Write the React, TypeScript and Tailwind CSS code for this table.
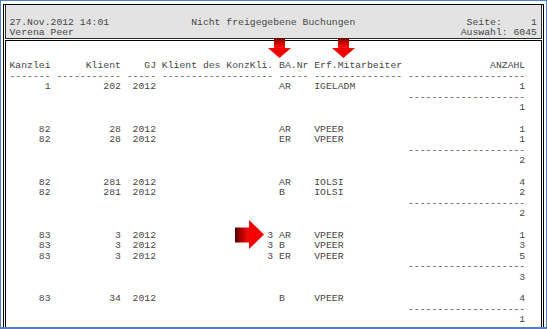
import React from "react";

const r = (s: string | number, n: number) => String(s).padStart(n);
const l = (s: string | number, n: number) => String(s).padEnd(n);

function row(k: number, kl: number, gj: number, konz: string | number, ba: string, erf: string, anz: number) {
  return [r(k, 7), r(kl, 11), r(gj, 5), r(konz, 19), l(ba, 5), l(erf, 15), r(anz, 20)].join(" ");
}

const headLines = [
  l("27.Nov.2012 14:01", 31) + l("Nicht freigegebene Buchungen", 47) + "Seite:" + r(1, 6),
  l("Verena Peer", 77) + "Auswahl: 6045",
];

const colHead = [l("Kanzlei", 7), r("Klient", 11), r("GJ", 5), l("Klient des KonzKli.", 19), l("BA.Nr", 5), l("Erf.Mitarbeiter", 15), r("ANZAHL", 20)].join(" ");
const dashes = [7, 11, 5, 19, 5, 15, 20].map((n) => "-".repeat(n)).join(" ");
const subDash = " ".repeat(68) + "-".repeat(20);
const sub = (v: number) => r(v, 88);

const bodyLines = [
  colHead,
  dashes,
  row(1, 202, 2012, "", "AR", "IGELADM", 1),
  subDash,
  sub(1),
  "",
  row(82, 28, 2012, "", "AR", "VPEER", 1),
  row(82, 28, 2012, "", "ER", "VPEER", 1),
  subDash,
  sub(2),
  "",
  row(82, 281, 2012, "", "AR", "IOLSI", 4),
  row(82, 281, 2012, "", "B", "IOLSI", 2),
  subDash,
  sub(2),
  "",
  row(83, 3, 2012, 3, "AR", "VPEER", 1),
  row(83, 3, 2012, 3, "B", "VPEER", 3),
  row(83, 3, 2012, 3, "ER", "VPEER", 5),
  subDash,
  sub(3),
  "",
  row(83, 34, 2012, "", "B", "VPEER", 4),
  subDash,
  sub(1),
];

function DownArrow({ id }: { id: string }) {
  return (
    <svg width="23" height="20" viewBox="0 0 23 20">
      <defs>
        <linearGradient id={id} x1="0" y1="0" x2="0" y2="1">
          <stop offset="0" stopColor="#6e0000" />
          <stop offset="0.5" stopColor="#d00000" />
          <stop offset="1" stopColor="#ff1a1a" />
        </linearGradient>
      </defs>
      <rect x="6" y="0" width="11" height="10.5" fill={`url(#${id})`} />
      <polygon points="0,10 23,10 11.5,20" fill="#f20000" />
    </svg>
  );
}

function RightArrow() {
  return (
    <svg width="29" height="29" viewBox="0 0 29 29">
      <defs>
        <linearGradient id="ra" x1="0" y1="0" x2="1" y2="0">
          <stop offset="0" stopColor="#4a0000" />
          <stop offset="0.5" stopColor="#c00000" />
          <stop offset="1" stopColor="#ff1010" />
        </linearGradient>
      </defs>
      <rect x="0" y="7.5" width="15" height="15" fill="url(#ra)" />
      <polygon points="14,0 29,14.5 14,29" fill="#f40000" />
    </svg>
  );
}

export default function App() {
  const mono = "font-['Liberation_Mono','Courier_New',monospace] text-[9.775px] text-[#474747] whitespace-pre";
  return (
    <div className="relative w-[547px] h-[329px] overflow-hidden bg-white border-x border-t border-b-2 border-[#5580bd] pl-[2px] pr-[2px] pt-[3px]">
      <div className="h-full flex flex-col border-x border-t border-black px-px">
        <div className="h-[34px] shrink-0 bg-[#e3e3e3] border-x border-b border-[#2a2a2a] pl-[3.5px] pt-[13px]">
          <pre className={`${mono} leading-[10px]`}>{headLines.join("\n")}</pre>
        </div>
        <div className="mt-px flex-1 min-h-0 bg-white border-x border-t border-black pl-[3.5px] pt-[20px]">
          <pre className={`${mono} leading-[10.6px]`}>{bodyLines.join("\n")}</pre>
        </div>
      </div>

      <div className="absolute left-[267px] top-[37px]">
        <DownArrow id="da1" />
      </div>
      <div className="absolute left-[331px] top-[37px]">
        <DownArrow id="da2" />
      </div>
      <div className="absolute left-[234px] top-[219px]">
        <RightArrow />
      </div>
    </div>
  );
}
